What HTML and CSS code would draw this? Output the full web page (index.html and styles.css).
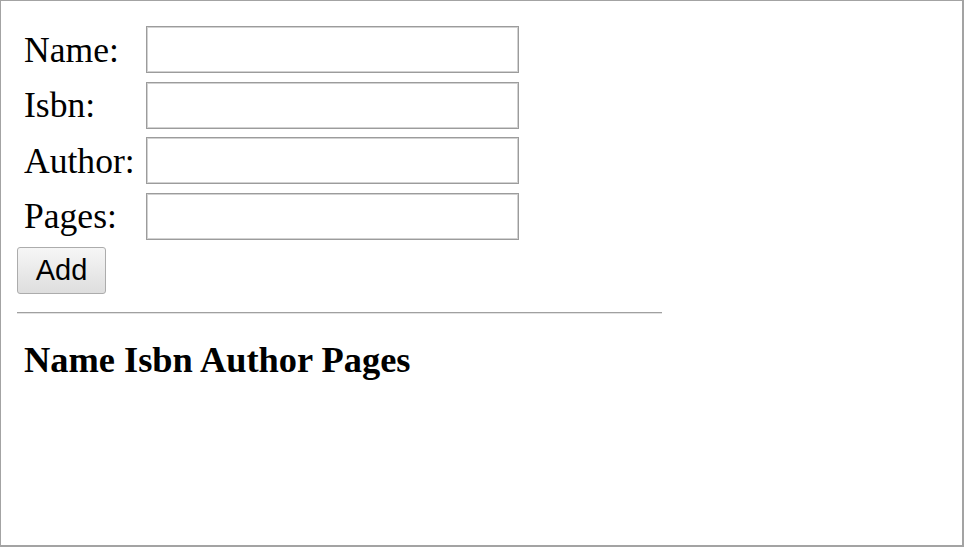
FILE: index.html
```html
<!DOCTYPE html>
<html>
<head>
<meta charset="utf-8">
<title>Books</title>
<link rel="stylesheet" href="styles.css">
</head>
<body>
<div class="frame">
  <form class="book-form">
    <label class="field-label" for="name">Name:</label>
    <input class="field-input" id="name" type="text">
    <label class="field-label" for="isbn">Isbn:</label>
    <input class="field-input" id="isbn" type="text">
    <label class="field-label" for="author">Author:</label>
    <input class="field-input" id="author" type="text">
    <label class="field-label" for="pages">Pages:</label>
    <input class="field-input" id="pages" type="text">
  </form>
  <button class="add-btn" type="button">Add</button>
  <div class="rule"></div>
  <div class="list-head">Name Isbn Author Pages</div>
</div>
</body>
</html>
```
FILE: styles.css
```css
html, body {
  margin: 0;
  padding: 0;
  background: #ffffff;
}

.frame {
  box-sizing: border-box;
  width: 964px;
  height: 547px;
  border-style: solid;
  border-color: #a3a3a3;
  border-width: 1px 2px 2px 1px;
  padding: 25px 16px 0 16px;
  font-family: "Liberation Serif", "Times New Roman", serif;
  color: #000;
}

.book-form {
  display: grid;
  grid-template-columns: 129px 373px;
  grid-auto-rows: 47px;
  row-gap: 8.67px;
  margin: 0;
}

.field-label {
  align-self: center;
  padding-left: 7px;
  font-size: 35.6px;
  line-height: normal;
}

.field-input {
  box-sizing: border-box;
  width: 373px;
  height: 47px;
  margin: 0;
  border: 1px solid #9c9c9c;
  box-shadow: inset 0 0 0 1px #d2d2d2;
  background: #fff;
  outline: none;
}

.add-btn {
  display: block;
  box-sizing: border-box;
  width: 89px;
  height: 47px;
  margin: 7px 0 0 0;
  padding: 0;
  border: 1px solid #acacac;
  border-radius: 3px;
  background: linear-gradient(#f6f6f6, #dedede);
  font-family: "Liberation Sans", Arial, sans-serif;
  font-size: 29px;
  color: #000;
}

.rule {
  width: 645px;
  height: 0;
  margin-top: 18px;
  border-top: 1px solid #a0a0a0;
  border-bottom: 1px solid #e2e2e2;
}

.list-head {
  margin-top: 25px;
  padding-left: 7px;
  font-size: 36.4px;
  line-height: 42px;
  font-weight: bold;
}
```
